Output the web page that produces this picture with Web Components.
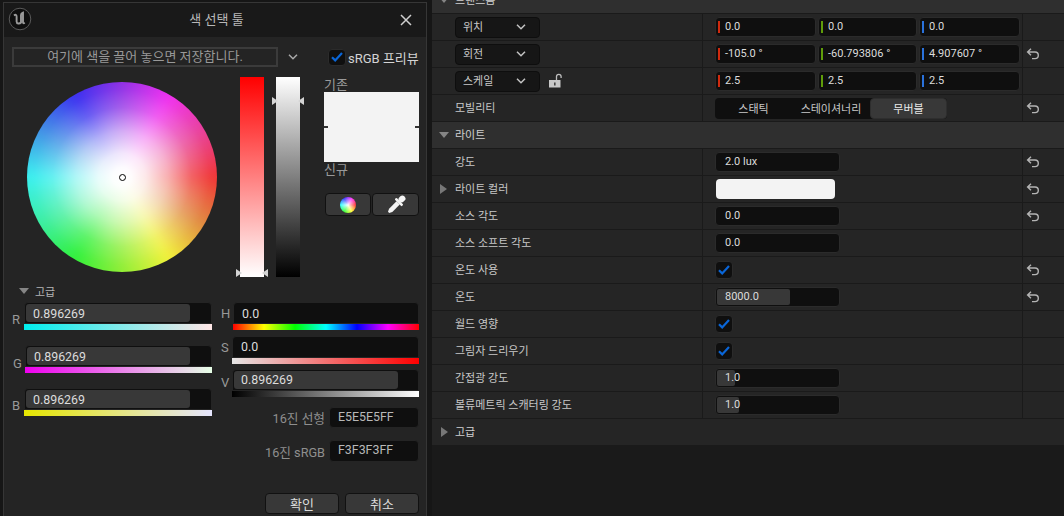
<!DOCTYPE html>
<html lang="ko"><head><meta charset="utf-8"><title>색 선택 툴</title>
<style>
html,body{margin:0;height:516px;overflow:hidden;background:#161616}
body{font:11px Roboto,"Noto Sans CJK KR",sans-serif;color:#ccc}
</style></head><body>
<ue-app>
  <color-picker slot="left"></color-picker>
  <detail-panel slot="right">
    <section-head open label="트랜스폼" class="clip"></section-head>
    <detail-row>
      <combo-box slot="name">위치</combo-box>
      <vec-field slot="value" x="0.0" y="0.0" z="0.0"></vec-field>
    </detail-row>
    <detail-row reset>
      <combo-box slot="name">회전</combo-box>
      <vec-field slot="value" x="-105.0 °" y="-60.793806 °" z="4.907607 °"></vec-field>
    </detail-row>
    <detail-row>
      <combo-box slot="name" lock>스케일</combo-box>
      <vec-field slot="value" x="2.5" y="2.5" z="2.5"></vec-field>
    </detail-row>
    <detail-row reset label="모빌리티"><seg-control slot="value"></seg-control></detail-row>
    <section-head open label="라이트"></section-head>
    <detail-row reset label="강도"><num-field slot="value" w="125">2.0 lux</num-field></detail-row>
    <detail-row reset arrow label="라이트 컬러"><color-chip slot="value"></color-chip></detail-row>
    <detail-row reset label="소스 각도"><num-field slot="value" w="125">0.0</num-field></detail-row>
    <detail-row label="소스 소프트 각도"><num-field slot="value" w="125">0.0</num-field></detail-row>
    <detail-row reset label="온도 사용"><ue-check slot="value"></ue-check></detail-row>
    <detail-row reset label="온도"><num-field slot="value" w="125" fill="73">8000.0</num-field></detail-row>
    <detail-row label="월드 영향"><ue-check slot="value"></ue-check></detail-row>
    <detail-row label="그림자 드리우기"><ue-check slot="value"></ue-check></detail-row>
    <detail-row label="간접광 강도"><num-field slot="value" w="125" fill="18">1.0</num-field></detail-row>
    <detail-row label="볼류메트릭 스캐터링 강도"><num-field slot="value" w="125" fill="22">1.0</num-field></detail-row>
    <section-head label="고급" flat></section-head>
  </detail-panel>
</ue-app>
<script>
const KR='Roboto,"Noto Sans CJK KR",sans-serif';
function def(name,render){
  customElements.define(name,class extends HTMLElement{
    constructor(){super();this.attachShadow({mode:'open'});}
    connectedCallback(){const a=n=>this.getAttribute(n);this.shadowRoot.innerHTML=render(a,n=>this.hasAttribute(n));}
  });
}
const RESET='<svg width="14" height="14" viewBox="0 0 14 14" fill="none" stroke="#b4b4b4" stroke-width="1.4"><path d="M5 1.8 1.6 5l3.400 3.200M1.800 5H9a3 3 0 0 1 0 6.600H6"/></svg>';
const CHEV=(c='#c4c4c4')=>`<svg width="10" height="6" viewBox="0 0 10 6" fill="none" stroke="${c}" stroke-width="1.5"><path d="M1 .8 5 4.800 9 .8"/></svg>`;

def('ue-app',()=>`<style>:host{display:flex;width:1064px;height:516px;overflow:hidden}
.l{flex:0 0 427px}.r{flex:1;margin-left:5px;min-width:0}</style>
<div class="l"><slot name="left"></slot></div><div class="r"><slot name="right"></slot></div>`);

def('detail-panel',()=>`<style>:host{display:block;height:516px;overflow:hidden;background:#1a1a1a}
.in{margin-top:-13px}</style><div class="in"><slot></slot></div>`);

def('section-head',(a,h)=>`<style>:host{display:flex;align-items:center;height:26px;background:${h('flat')?'#252525':'#2f2f2f'};border-bottom:1px solid #1a1a1a;font:11px ${KR};color:#d0d0d0}
.a{width:23px;display:flex;justify-content:center;padding-left:1px;box-sizing:border-box}
.d{width:0;height:0;border:5px solid transparent;border-top:6px solid #858585;border-bottom:0}
.rt{width:0;height:0;border:5px solid transparent;border-left:7px solid #777;border-right:0}
span{margin-top:-2px}</style>
<div class="a"><div class="${h('open')?'d':'rt'}"></div></div><span>${a('label')}</span>`);

def('detail-row',(a,h)=>`<style>:host{display:grid;grid-template-columns:270px 320px 1fr;height:26px;background:#252525;border-bottom:1px solid #1a1a1a;font:11px ${KR};color:#c8c8c8}
.n{display:flex;align-items:center}
.n span{margin-top:-2px}
.a{width:23px;display:flex;justify-content:center}
.t{width:0;height:0;border:5px solid transparent;border-left:7px solid #777;border-right:0}
.v{display:flex;align-items:center;border-left:1px solid #1a1a1a;padding-left:12px;}
.x{display:flex;align-items:center;border-left:1px solid #1a1a1a;padding-left:3px}</style>
<div class="n"><div class="a">${h('arrow')?'<div class="t"></div>':''}</div>${a('label')?`<span>${a('label')}</span>`:''}<slot name="name"></slot></div>
<div class="v"><slot name="value"></slot></div><div class="x">${h('reset')?RESET:''}</div>`);

def('combo-box',(a,h)=>`<style>:host{display:flex;align-items:center;gap:8px;font:11px ${KR};color:#c8c8c8}
.b{box-sizing:border-box;width:85px;height:21px;background:#161616;border:1px solid #0e0e0e;border-radius:4px;display:flex;align-items:center;justify-content:space-between;padding:0 13px 0 7px}
.b span{margin-top:-2px}
svg.l{margin-top:-1px}</style>
<div class="b"><span><slot></slot></span>${CHEV()}</div>
${h('lock')?`<svg class="l" width="15" height="15" viewBox="0 0 15 15"><path d="M8.500 7.500V3.600a2.300 2.300 0 0 1 4.600 0V5" fill="none" stroke="#bdbdbd" stroke-width="1.3"/><rect x="1" y="7" width="11.500" height="7.500" fill="#c8c8c8"/><rect x="6" y="9.500" width="1.600" height="3" fill="#444"/></svg>`:''}`);

def('num-field',(a,h)=>{const w=a('w');const f=a('fill');return `<style>:host{display:block;flex:none;position:relative;box-sizing:border-box;width:${w}px;height:20px;background:#0f0f0f;border:1px solid #2b2b2b;border-radius:4px;font:11px ${KR};color:#dcdcdc}
.f{position:absolute;left:1px;top:1px;bottom:1px;width:${f}px;background:#383838;border-radius:2px}
.t{position:absolute;left:${a('tx')||9}px;top:0;line-height:18px;white-space:nowrap}
.k{position:absolute;left:2px;top:3px;bottom:3px;width:2px;background:${a('tick')}}</style>
${f?'<div class="f"></div>':''}${a('tick')?'<div class="k"></div>':''}<span class="t"><slot></slot></span>`;});

def('vec-field',a=>`<style>:host{display:flex;gap:2px}</style>
<num-field w="101" tick="#d02a0e">${a('x')}</num-field><num-field w="99" tick="#5f9d0a">${a('y')}</num-field><num-field w="101" tick="#2a72dc">${a('z')}</num-field>`);

def('seg-control',()=>`<style>:host{display:grid;grid-template-columns:77px 78px 77px;width:232px;height:21px;background:#0f0f0f;border-radius:4px;font:11px ${KR};color:#c8c8c8}
div{display:flex;align-items:center;justify-content:center;padding-bottom:1px;box-sizing:border-box}
.s{background:#383838;border-radius:4px;color:#e8e8e8;border:1px solid #2e2e2e}</style>
<div>스태틱</div><div>스테이셔너리</div><div class="s">무버블</div>`);

def('color-chip',()=>`<style>:host{display:block;width:119px;height:20px;margin-left:1px;background:#f3f3f3;border-radius:4px}</style>`);

def('ue-check',(a)=>`<style>:host{display:flex;box-sizing:border-box;width:18px;height:18px;background:#0f0f0f;border:1px solid #2b2b2b;border-radius:4px;align-items:center;justify-content:center}</style>
<svg width="12" height="10" viewBox="0 0 12 10" fill="none" stroke="#0a66d8" stroke-width="2.2"><path d="M1 5.200 4.200 8.400 11 1"/></svg>`);

def('grad-field',a=>`<style>:host{display:flex;font:12.4px ${KR};margin-left:${a('mx')||0}px}
.l{width:${a('lw')}px;flex:none;color:#999;font-size:13px;line-height:16px;padding-top:${a('ly')}px;box-sizing:border-box}
.c{flex:1;min-width:0}
.b{position:relative;box-sizing:border-box;height:22px;background:#0f0f0f;border:1px solid #242424;border-radius:4px 4px 0 0;color:#dcdcdc}
.f{position:absolute;left:1px;top:1px;bottom:1px;width:${a('fill')}px;background:#383838;border-radius:3px}
.t{position:absolute;left:${a('tx')}px;top:${a('ty')||2}px;line-height:18px}
.g{height:6px;background:${a('grad')}}</style>
<div class="l">${a('name')}</div><div class="c"><div class="b">${+a('fill')?'<div class="f"></div>':''}<span class="t">${a('value')}</span></div><div class="g"></div></div>`);

def('hex-field',a=>`<style>:host{display:flex;justify-content:flex-end;align-items:center;gap:4px;height:${a('h')}px;font:12.4px ${KR};color:#8f8f8f}
span{font-size:12.7px}
.b{box-sizing:border-box;width:90px;height:100%;background:#0f0f0f;border:1px solid #242424;border-radius:4px;padding-left:8px;line-height:${a('h')-4}px;color:#b8b8b8}</style>
<span>${a('label')}</span><div class="b">${a('value')}</div>`);

def('ue-btn',a=>`<style>:host{display:flex;box-sizing:border-box;align-items:center;justify-content:center;width:${a('w')}px;height:${a('h')}px;background:#383838;border:1px solid #111;border-radius:4px;font:13px ${KR};color:#dcdcdc}</style><slot></slot>`);

def('value-bar',a=>{const y=a('hy');const bt=+y>0?`top:${y}px`:'bottom:0';const hl=`width:0;height:0;border:4px solid transparent;position:absolute;${bt}`;
return `<style>:host{display:block;flex:none;position:relative;width:24px;height:200px;background:${a('grad')}}
.a{${hl};left:-4px;border-left:6px solid #d4d4d4;border-right:0}.b{${hl};right:-4px;border-right:6px solid #d4d4d4;border-left:0}</style>
<div class="a"></div><div class="b"></div>`;});

def('color-wheel',()=>`<style>:host{display:block;flex:none;position:relative;width:190px;height:190px;border-radius:50%;overflow:hidden}
.h{position:absolute;inset:-14px;background:conic-gradient(from 90deg,#f03535,#e08a40,#f2f23a,#90ee35,#30f03a,#3aeea0,#3af0f0,#4090e5,#3a30f0,#9030e5,#f030f0,#e8409a,#f03535);filter:blur(5px)}
.o{position:absolute;inset:0;background:radial-gradient(circle closest-side,#fff 0,rgba(255,255,255,.98) 10%,rgba(255,255,255,.88) 25%,rgba(255,255,255,.6) 48%,rgba(255,255,255,.22) 73%,rgba(255,255,255,.04) 92%,rgba(255,255,255,0) 100%)}
.s{position:absolute;left:92px;top:92px;width:7px;height:7px;box-sizing:border-box;border:1.500px solid #000;border-radius:50%;background:#fff}</style><div class="h"></div><div class="o"></div><div class="s"></div>`);

def('color-picker',()=>`<style>
:host{display:block;box-sizing:border-box;width:424px;height:520px;margin:2px 0 0 3px;background:#242424;border:1px solid #363636;border-bottom:0;font:13px ${KR};color:#aaa;overflow:hidden}
.title{display:flex;align-items:center;justify-content:space-between;height:34px;background:#191919;padding:0 14px 0 4px;position:relative;color:#b8b8b8}
.title b{font-weight:400;position:absolute;left:3px;right:0;text-align:center;top:9px;line-height:16px}
.top{display:flex;align-items:center;margin:10px 0 0 8px}
.strip{box-sizing:border-box;width:266px;height:20px;border:2px solid #3b3b3b;text-align:center;line-height:16px;color:#999}
.chev{margin-left:10px;width:10px;display:flex}
.cb{margin-left:30px;width:18px;height:17px;box-sizing:border-box;background:#0f0f0f;border:1px solid #2b2b2b;border-radius:4px;display:flex;align-items:center;justify-content:center}
.srgb{margin-left:2px;color:#d4d4d4;white-space:nowrap}
.main{display:flex;margin:10px 0 0 23px}
color-wheel{margin-top:5px}
.b1{margin-left:23px}.b2{margin-left:12px}
.side{margin-left:24px;width:95px;flex:none}
.cap{height:15px;line-height:15px;color:#999;font-size:13px}
.sw{height:70px;background:#f3f3f3;display:flex;justify-content:space-between;align-items:center}
.sw i{display:block;width:4px;height:2px;background:#333}
.btns{display:flex;gap:1px;margin:16px 0 0 1px}
.mw{width:16px;height:16px;border-radius:50%;background:radial-gradient(circle closest-side,#fff 0,rgba(255,255,255,.6) 35%,rgba(255,255,255,0) 100%),conic-gradient(from 90deg,#f33,#ff3,#3f3,#3ff,#33f,#f3f,#f33)}
.adv{display:flex;align-items:center;height:14px;margin:7px 0 0 15px;color:#b4b4b4;font-size:11px}
.adv i{display:block;width:0;height:0;border:5px solid transparent;border-top:6px solid #858585;border-bottom:0;margin-right:6px}
.low{display:flex;margin:4px 0 0 8px}
.lc{width:200px;display:flex;flex-direction:column;gap:15px}
.rc{width:198px;margin-left:9px;display:flex;flex-direction:column}
.ok{display:flex;justify-content:flex-end;gap:6px;margin-top:31px}
</style>
<div class="title">
<svg width="24" height="24" viewBox="0 0 24 24" fill="none" style="margin-top:-2px"><circle cx="12" cy="12" r="10.800" fill="#0e0e0e" stroke="#5a5a5a" stroke-width="1"/><path d="M6 8.500c1.500-1.200 2.600-.8 2.600 1v5c0 2.400 3 2.600 4.400 1V8c0-1 .8-1.800 2-2.300v9.600c0 1 .6 1.200 1.800.4" stroke="#9a9a9a" stroke-width="1.900"/></svg>
<b>색 선택 툴</b>
<svg width="12" height="12" viewBox="0 0 12 12" stroke="#cfcfcf" stroke-width="1.500" style="position:relative"><path d="M1 1 11 11M11 1 1 11"/></svg>
</div>
<div class="top">
<div class="strip">여기에 색을 끌어 놓으면 저장합니다.</div>
<div class="chev">${CHEV('#aaa')}</div>
<div class="cb"><svg width="12" height="10" viewBox="0 0 12 10" fill="none" stroke="#0a66d8" stroke-width="2.200"><path d="M1 5.200 4.200 8.400 11 1"/></svg></div>
<span class="srgb">sRGB 프리뷰</span>
</div>
<div class="main">
<color-wheel></color-wheel>
<value-bar class="b1" grad="linear-gradient(#f00,#fff)" hy="0"></value-bar>
<value-bar class="b2" grad="linear-gradient(#fff,#000)" hy="20"></value-bar>
<div class="side">
<div class="cap">기존</div>
<div class="sw"><i></i><i></i></div>
<div class="cap">신규</div>
<div class="btns">
<ue-btn w="46" h="23"><div class="mw"></div></ue-btn>
<ue-btn w="47" h="23"><svg width="22" height="22" viewBox="0 0 22 22" fill="#f4f4f4"><g transform="rotate(45 11 11)"><rect x="8" y="-1" width="6" height="7" rx="2.800"/><rect x="6" y="5.500" width="10" height="2.600" rx="1"/><path d="M8.700 8h4.600v10.500L11.800 21.500h-1.600L8.700 18.500z"/></g></svg></ue-btn>
</div>
</div>
</div>
<div class="adv"><i></i><span>고급</span></div>
<div class="low">
<div class="lc">
<grad-field name="R" lw="12" ly="10" fill="164" tx="8" value="0.896269" grad="linear-gradient(90deg,#0ee,#ffe6e6)"></grad-field>
<grad-field name="G" lw="12" ly="11" mx="1" fill="163" tx="8" value="0.896269" grad="linear-gradient(90deg,#e0e,#e6ffe6)"></grad-field>
<grad-field name="B" lw="12" ly="10" fill="164" tx="8" value="0.896269" grad="linear-gradient(90deg,#e6e600,#e6e6ff)"></grad-field>
</div>
<div class="rc">
<grad-field name="H" lw="12" ly="4" fill="0" tx="8" value="0.0" grad="linear-gradient(90deg,#f00,#ff0,#0f0,#0ff,#00f,#f0f,#f00)"></grad-field>
<grad-field name="S" lw="11" ly="4" fill="0" tx="8" ty="1" value="0.0" style="margin-top:6px" grad="linear-gradient(90deg,#e6e6e6,#f00)"></grad-field>
<grad-field name="V" lw="11" ly="6" fill="164" tx="8" ty="1" value="0.896269" style="margin-top:5px" grad="linear-gradient(90deg,#000,#fff)"></grad-field>
<hex-field label="16진 선형" value="E5E5E5FF" h="21" style="margin-top:10px"></hex-field>
<hex-field label="16진 sRGB" value="F3F3F3FF" h="22" style="margin-top:12px"></hex-field>
<div class="ok"><ue-btn w="74" h="21">확인</ue-btn><ue-btn w="74" h="21">취소</ue-btn></div>
</div>
</div>`);
</script>
</body></html>
